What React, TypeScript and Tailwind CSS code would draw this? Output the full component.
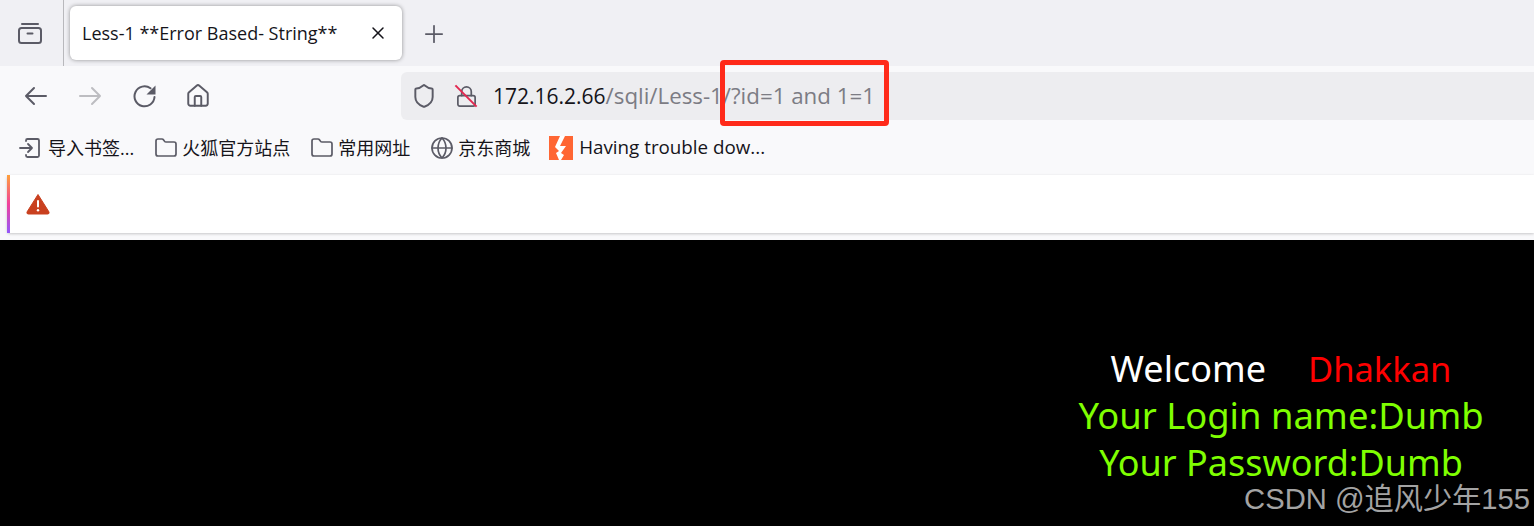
import React from 'react';
import { House, Plus, X, Shield, Lock, Folder, Globe } from 'lucide-react';

const uiFont = "font-['Open_Sans','Noto_Sans_CJK_SC',sans-serif]";

// sidebar toggle in the tab strip
const SidebarIcon = () => (
  <svg width="26" height="26" viewBox="0 0 26 26" fill="none" stroke="#5b5b66" strokeWidth="2" strokeLinecap="round" strokeLinejoin="round">
    <path d="M5 4h16" />
    <rect x="2" y="8" width="22" height="15" rx="2.5" />
    <path d="M10.5 13.5h5" />
  </svg>
);

const BackIcon = ({ color, flip }: { color: string; flip?: boolean }) => (
  <svg width="24" height="20" viewBox="0 0 24 20" fill="none" stroke={color} strokeWidth="2" strokeLinecap="round" strokeLinejoin="round" className={flip ? '-scale-x-100' : ''}>
    <path d="M2 10h20M10 2l-8 8 8 8" />
  </svg>
);

const ReloadIcon = () => (
  <svg width="24" height="24" viewBox="0 0 24 24" fill="none">
    <path d="M21.500 13a10 10 0 1 1-4-8.700" stroke="#5b5b66" strokeWidth="2" strokeLinecap="round" />
    <path d="M22.500 1.500v9h-9z" fill="#5b5b66" />
  </svg>
);

const ImportIcon = () => (
  <svg width="22" height="20" viewBox="0 0 22 20" fill="none" stroke="#5b5b66" strokeWidth="1.8" strokeLinecap="round" strokeLinejoin="round">
    <path d="M1 10h12M9 6l4 4-4 4" />
    <path d="M7 3V2.500A1.500 1.500 0 0 1 8.500 1h10A1.500 1.500 0 0 1 20 2.500v15a1.500 1.500 0 0 1-1.500 1.500h-10A1.500 1.500 0 0 1 7 17.500V17" />
  </svg>
);

const BoltIcon = () => (
  <svg width="24" height="24" viewBox="0 0 24 24">
    <rect width="24" height="24" fill="#ff6633" />
    <path d="M11 0h5l-5 10h6l-5 7 3 2-3 5h-2l-3-7 3-2-4-4z" fill="#fff" />
  </svg>
);

const WarningIcon = () => (
  <svg width="24" height="22" viewBox="0 0 24 22">
    <path d="M12 1.500 23 19a1.500 1.500 0 0 1-1.300 2H2.300A1.500 1.500 0 0 1 1 19z" fill="#c9401f" stroke="#c9401f" strokeLinejoin="round" />
    <rect x="11" y="7" width="2" height="7.500" rx="1" fill="#fff" />
    <circle cx="12" cy="17.300" r="1.200" fill="#fff" />
  </svg>
);

const Bookmark = ({ icon, label, className, textClass }: { icon: React.ReactNode; label: string; className: string; textClass?: string }) => (
  <div className={`flex items-center ${className}`}>
    {icon}
    <span className={`leading-none text-[#15141a] whitespace-nowrap ${textClass || 'text-[18px]'}`}>{label}</span>
  </div>
);

export default function App() {
  return (
    <div className={`relative w-[1534px] h-[526px] overflow-hidden bg-black ${uiFont}`}>
      {/* Tab strip */}
      <div className="flex h-[66px] bg-[#f0f0f4]">
        <div className="flex w-[64px] items-center border-r border-[#b8b8bc] pl-[17px]">
          <SidebarIcon />
        </div>
        <div className="ml-[6px] mt-[6px] flex h-[54px] w-[332px] items-center justify-between rounded-[6px] bg-white pl-[12px] pr-[14px] shadow-[0_0_4px_rgba(0,0,0,0.4)]">
          <span className="text-[18px] text-[#15141a] whitespace-nowrap">Less-1 **Error Based- String**</span>
          <X size={20} strokeWidth={1.8} color="#15141a" />
        </div>
        <div className="ml-[18px] mt-[1px] flex items-center">
          <Plus size={28} strokeWidth={1.5} color="#5b5b66" />
        </div>
      </div>

      {/* Toolbar */}
      <div className="flex h-[60px] items-center bg-[#f9f9fb] pl-[24px]">
        <BackIcon color="#5b5b66" />
        <span className="ml-[30px]">
          <BackIcon color="#bdbdc1" flip />
        </span>
        <span className="ml-[31px]">
          <ReloadIcon />
        </span>
        <House size={26} strokeWidth={1.8} color="#5b5b66" className="ml-[28px]" />
        <div className="ml-[190px] flex h-[48px] flex-1 items-center rounded-l-[6px] bg-[#ededf0] pl-[10px]">
          <Shield size={26} strokeWidth={1.8} color="#5b5b66" />
          <span className="relative ml-[16px] flex h-[26px] w-[26px] items-center justify-center">
            <Lock size={23} strokeWidth={1.8} color="#5b5b66" />
            <span className="absolute left-[12px] top-[-2px] h-[30px] w-[2px] -rotate-45 bg-[#e22850]" />
          </span>
          <span className="ml-[14px] whitespace-nowrap text-[21px] text-[#15141a]">
            172.16.2.66<span className="text-[22.3px] text-[#7c7c84]">/sqli/Less-1/?id=1 and 1=1</span>
          </span>
        </div>
      </div>

      {/* Bookmarks */}
      <div className="flex h-[43px] items-center bg-[#f9f9fb]">
        <Bookmark className="ml-[19px] gap-[7px]" icon={<ImportIcon />} label="导入书签..." />
        <Bookmark className="ml-[20px] gap-[4px]" icon={<Folder size={24} strokeWidth={1.7} color="#5b5b66" />} label="火狐官方站点" />
        <Bookmark className="ml-[20px] gap-[4px]" icon={<Folder size={24} strokeWidth={1.7} color="#5b5b66" />} label="常用网址" />
        <Bookmark className="ml-[20px] gap-[4px]" icon={<Globe size={24} strokeWidth={1.7} color="#5b5b66" />} label="京东商城" />
        <Bookmark className="ml-[19px] gap-[6px]" textClass="text-[18.8px]" icon={<BoltIcon />} label="Having trouble dow..." />
      </div>

      {/* Notification bar */}
      <div className="h-[71px] bg-[#f9f9fb] pl-[7px] pt-[6px]">
        <div className="flex h-[58px] items-center rounded-l-[3px] border-l-[3px] border-transparent bg-white pl-[16px] shadow-[0_1px_3px_rgba(0,0,0,0.2)] [border-image:linear-gradient(#ffa436,#f2409b,#9059ff)_1]">
          <WarningIcon />
        </div>
      </div>

      {/* Page */}
      <div className="flex justify-end bg-black pr-[50px] pt-[105px] font-['Noto_Sans',sans-serif] text-[36.4px] leading-[47px]">
        <div className="w-[406px] text-center text-[#7fff00]">
          <div className="flex items-baseline justify-center whitespace-pre">
            <span className="text-[36px] text-white">Welcome</span>
            <span className="ml-[42px] text-[34.5px] text-[#ff0000]">Dhakkan</span>
          </div>
          <div className="whitespace-nowrap">Your Login name:Dumb</div>
          <div className="whitespace-nowrap text-[36px]">Your Password:Dumb</div>
        </div>
      </div>

      {/* Annotation box drawn over the address bar */}
      <div className="absolute left-[720px] top-[60px] h-[66px] w-[169px] rounded-[4px] border-[5px] border-[#ff2a1a]" />

      {/* Watermark */}
      <div className="absolute right-[4px] top-[485px] font-['Liberation_Sans','Noto_Sans_CJK_SC',sans-serif] text-[29.2px] leading-[28px] text-[#a3a3a3] whitespace-nowrap">
        CSDN @追风少年155
      </div>
    </div>
  );
}
